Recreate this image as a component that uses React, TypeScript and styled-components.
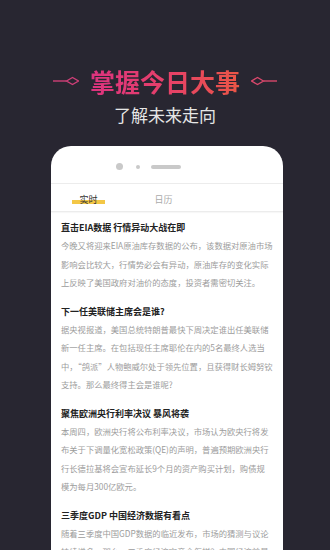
import React from "react";
import styled, { createGlobalStyle } from "styled-components";

const GlobalStyle = createGlobalStyle`
  html, body {
    margin: 0;
    padding: 0;
    height: 100%;
    overflow: hidden;
    background: #282631;
  }
  body {
    font-family: "Noto Sans CJK SC", "Noto Sans", sans-serif;
  }
`;

const Page = styled.div`
  width: 330px;
  height: 550px;
  overflow: hidden;
  background: #282631;
  display: flex;
  flex-direction: column;
  align-items: stretch;
  padding-top: 66px;
  box-sizing: border-box;
`;

const HeadingRow = styled.div`
  display: flex;
  align-items: center;
  justify-content: center;
  gap: 11px;
  height: 30px;
  flex-shrink: 0;
`;

const Heading = styled.h1`
  margin: 0;
  font-size: 25px;
  line-height: 30px;
  font-weight: 700;
  background: linear-gradient(90deg, #dd337f 0%, #e6406a 50%, #ea5646 100%);
  -webkit-background-clip: text;
  background-clip: text;
  color: transparent;
`;

const Sub = styled.div`
  margin-top: 8px;
  text-align: center;
  font-size: 17px;
  line-height: 22px;
  color: #e6e6e6;
  flex-shrink: 0;
`;

const Card = styled.div`
  margin: 20px 0 0 51px;
  width: 232px;
  flex: 1;
  background: #ffffff;
  border-radius: 20px 20px 0 0;
  display: flex;
  flex-direction: column;
  overflow: hidden;
`;

const Speaker = styled.div`
  height: 38px;
  flex-shrink: 0;
  display: flex;
  align-items: center;
  padding: 4px 0 0 65px;
  box-sizing: border-box;
  border-bottom: 1px solid #ececec;
`;

const Dot = styled.span<{ $size: number; $gap: number }>`
  width: ${(p) => p.$size}px;
  height: ${(p) => p.$size}px;
  border-radius: 50%;
  background: #c9c9c9;
  margin-right: ${(p) => p.$gap}px;
`;

const Grille = styled.span`
  width: 30px;
  height: 4px;
  border-radius: 2px;
  background: #c9c9c9;
`;

const Tabs = styled.div`
  height: 28px;
  flex-shrink: 0;
  box-sizing: border-box;
  display: flex;
  border-bottom: 1px solid #ececec;
  box-shadow: 0 1px 1px rgba(0, 0, 0, 0.03);
`;

const Tab = styled.div`
  width: 75px;
  display: flex;
  align-items: center;
  justify-content: center;
  padding-top: 4px;
  box-sizing: border-box;
`;

const TabLabel = styled.span<{ $active?: boolean }>`
  display: inline-block;
  padding: 0 7px;
  font-size: 9px;
  line-height: 10px;
  color: ${(p) => (p.$active ? "#333" : "#aaa")};
  background: ${(p) =>
    p.$active
      ? "linear-gradient(to bottom, transparent 50%, #f3c746 50%, #f3c746 88%, transparent 88%)"
      : "none"};
`;

const List = styled.div`
  flex-shrink: 0;
  padding: 8px 10px 0 10px;
  display: flex;
  flex-direction: column;
  gap: 12px;
`;

const Item = styled.div`
  display: flex;
  flex-direction: column;
  flex-shrink: 0;
`;

const Title = styled.div`
  font-size: 9px;
  line-height: 16px;
  font-weight: 700;
  color: #222;
  white-space: nowrap;
`;

const Body = styled.div`
  font-size: 8.3px;
  line-height: 18.5px;
  color: #9c9c9c;
  white-space: nowrap;
`;

const Ornament = ({ flip }: { flip?: boolean }) => (
  <svg
    width="26"
    height="10"
    viewBox="0 0 26 10"
    style={flip ? { transform: "scaleX(-1)" } : undefined}
  >
    <line x1="0" y1="5" x2="13.5" y2="5" stroke={flip ? "#d9486c" : "#cf3f78"} strokeWidth="1.4" />
    <polygon
      points="13.5,5 19.5,1.5 25.5,5 19.5,8.5"
      fill="none"
      stroke={flip ? "#d9486c" : "#cf3f78"}
      strokeWidth="1.4"
    />
  </svg>
);

const news: { title: string; lines: string[] }[] = [
  {
    title: "直击EIA数据 行情异动大战在即",
    lines: [
      "今晚又将迎来EIA原油库存数据的公布，该数据对原油市场",
      "影响会比较大，行情势必会有异动，原油库存的变化实际",
      "上反映了美国政府对油价的态度，投资者需密切关注。",
    ],
  },
  {
    title: "下一任美联储主席会是谁?",
    lines: [
      "据央视报道，美国总统特朗普最快下周决定谁出任美联储",
      "新一任主席。在包括现任主席耶伦在内的5名最终人选当",
      "中，“鸽派”人物鲍威尔处于领先位置，且获得财长姆努钦",
      "支持。那么最终得主会是谁呢?",
    ],
  },
  {
    title: "聚焦欧洲央行利率决议 暴风将袭",
    lines: [
      "本周四，欧洲央行将公布利率决议，市场认为欧央行将发",
      "布关于下调量化宽松政策(QE)的声明，普遍预期欧洲央行",
      "行长德拉基将会宣布延长9个月的资产购买计划，购债规",
      "模为每月300亿欧元。",
    ],
  },
  {
    title: "三季度GDP 中国经济数据有看点",
    lines: [
      "随着三季度中国GDP数据的临近发布，市场的猜测与议论",
      "持续增多。那么，三季度经济究竟会怎样？中国经济前景",
    ],
  },
];

export default function App() {
  return (
    <>
      <GlobalStyle />
      <Page>
        <HeadingRow>
          <Ornament />
          <Heading>掌握今日大事</Heading>
          <Ornament flip />
        </HeadingRow>
        <Sub>了解未来走向</Sub>
        <Card>
          <Speaker>
            <Dot $size={7} $gap={13} />
            <Dot $size={4} $gap={11} />
            <Grille />
          </Speaker>
          <Tabs>
            <Tab>
              <TabLabel $active>实时</TabLabel>
            </Tab>
            <Tab>
              <TabLabel>日历</TabLabel>
            </Tab>
          </Tabs>
          <List>
            {news.map((n) => (
              <Item key={n.title}>
                <Title>{n.title}</Title>
                <Body>
                  {n.lines.map((l, i) => (
                    <React.Fragment key={i}>
                      {l}
                      {i < n.lines.length - 1 && <br />}
                    </React.Fragment>
                  ))}
                </Body>
              </Item>
            ))}
          </List>
        </Card>
      </Page>
    </>
  );
}
